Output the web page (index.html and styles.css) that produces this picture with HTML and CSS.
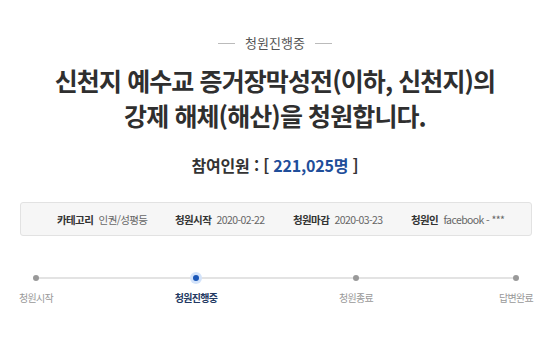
FILE: index.html
```html
<!DOCTYPE html>
<html lang="ko">
<head>
    <meta charset="UTF-8">
    <meta name="viewport" content="width=device-width, initial-scale=1.0">
    <title>청원진행중</title>
    <link rel="stylesheet" href="styles.css">
</head>
<body>
    <div class="petition">
        <div class="petition-status">
            <span class="status-line"></span>
            <span class="status-text">청원진행중</span>
            <span class="status-line"></span>
        </div>

        <h1 class="petition-title">신천지 예수교 증거장막성전(이하, 신천지)의<br>강제 해체(해산)을 청원합니다.</h1>

        <p class="petition-count">참여인원 : [ <span class="count-num">221,025명</span> ]</p>

        <ul class="petition-info">
            <li class="info-item"><b>카테고리</b> 인권/성평등</li>
            <li class="info-item"><b>청원시작</b> 2020-02-22</li>
            <li class="info-item"><b>청원마감</b> 2020-03-23</li>
            <li class="info-item"><b>청원인</b> facebook - ***</li>
        </ul>

        <ol class="petition-steps">
            <li class="step"><span class="step-dot"></span><span class="step-label">청원시작</span></li>
            <li class="step step-active"><span class="step-dot"></span><span class="step-label">청원진행중</span></li>
            <li class="step"><span class="step-dot"></span><span class="step-label">청원종료</span></li>
            <li class="step"><span class="step-dot"></span><span class="step-label">답변완료</span></li>
        </ol>
    </div>
</body>
</html>
```

FILE: styles.css
```css
body {
    margin: 0;
    padding: 0;
    background-color: #ffffff;
    color: #333333;
    font-family: "Noto Sans CJK KR", "Noto Sans", sans-serif;
}

.petition {
    width: 550px;
    padding-top: 34px;
}

/* Status header */
.petition-status {
    display: flex;
    justify-content: center;
    align-items: center;
    gap: 10px;
    height: 18px;
}

.status-line {
    width: 17px;
    height: 1px;
    background-color: #bbbbbb;
}

.status-text {
    font-size: 13px;
    line-height: 18px;
    color: #555555;
}

/* Title */
.petition-title {
    margin: 11px 0 0;
    text-align: center;
    font-size: 25px;
    line-height: 35px;
    font-weight: 700;
    letter-spacing: -0.9px;
    color: #2f2f2f;
}

.petition-count {
    margin: 21px 0 0;
    text-align: center;
    font-size: 16px;
    line-height: 22px;
    font-weight: 700;
    letter-spacing: -0.2px;
    color: #333333;
}

.count-num {
    color: #1f4e9a;
}

/* Info box */
.petition-info {
    display: flex;
    list-style: none;
    margin: 26px 18px 0 20px;
    padding: 0 0 0 36px;
    height: 32px;
    align-items: center;
    background-color: #f6f6f6;
    border: 1px solid #e2e2e2;
    border-radius: 3px;
}

.info-item {
    width: 118px;
    font-size: 10.5px;
    color: #666666;
    letter-spacing: -0.6px;
    white-space: nowrap;
}

.info-item b {
    color: #333333;
    margin-right: 3px;
}

/* Steps */
.petition-steps {
    display: flex;
    justify-content: space-between;
    list-style: none;
    margin: 36px 4px 0 6px;
    padding: 0;
    background: linear-gradient(#e3e3e3, #e3e3e3) no-repeat;
    background-size: calc(100% - 60px) 2px;
    background-position: 30px 5px;
}

.step {
    width: 60px;
    display: flex;
    flex-direction: column;
    align-items: center;
}

.step-dot {
    width: 6px;
    height: 6px;
    margin: 3px 0;
    border-radius: 50%;
    background-color: #999999;
}

.step-label {
    margin-top: 6px;
    font-size: 10px;
    line-height: 16px;
    letter-spacing: -0.7px;
    color: #999999;
    white-space: nowrap;
}

.step-active .step-dot {
    background-color: #1a57b8;
    box-shadow: 0 0 0 3px #d3e3fa;
}

.step-active .step-label {
    color: #243a63;
    font-weight: 700;
}
```
